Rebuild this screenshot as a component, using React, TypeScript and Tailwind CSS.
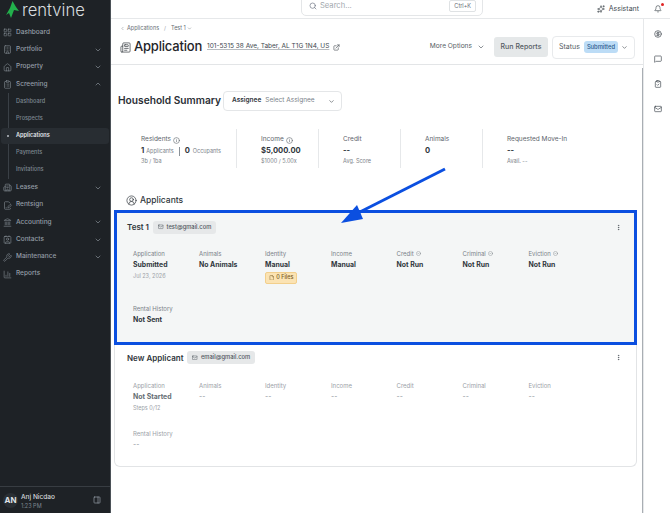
import {
  BarChart3, Bell, Building, ChevronDown, ChevronLeft, ChevronUp, ClipboardCheck, ClipboardList,
  CircleCheck, CircleDollarSign, CircleUserRound, Contact, EllipsisVertical, ExternalLink, File, FileSignature, Home,
  Info, Landmark, LayoutGrid, Mail, MessageSquare, Newspaper, PanelRight, Search, Sparkles, Wrench, Building2,
} from "lucide-react";

const navTop = [
  { label: "Dashboard", icon: LayoutGrid },
  { label: "Portfolio", icon: Building, chevron: true },
  { label: "Property", icon: Home, chevron: true },
];

const navBottom = [
  { label: "Leases", icon: Building2, chevron: true },
  { label: "Rentsign", icon: FileSignature },
  { label: "Accounting", icon: Landmark, chevron: true },
  { label: "Contacts", icon: Contact, chevron: true },
  { label: "Maintenance", icon: Wrench, chevron: true },
  { label: "Reports", icon: BarChart3 },
];

const screeningLinks = ["Dashboard", "Prospects", "Applications", "Payments", "Invitations"];

const NavItem = ({ label, icon: Icon, chevron }: { label: string; icon: typeof Home; chevron?: boolean }) => (
  <div className="flex h-[17.3px] items-center pl-[3px] pr-[8px] text-[#949da6]">
    <Icon size={9} strokeWidth={1.5} className="mr-[4px] text-[#8b949c]" />
    <span className="text-[6.5px] font-medium">{label}</span>
    {chevron && <ChevronDown size={8} className="ml-auto text-[#8b949c]" />}
  </div>
);

const Sidebar = () => (
  <aside className="flex h-full w-[111px] shrink-0 flex-col border-r border-[#4b5157] bg-[#1e2226]">
    <div className="flex h-[24px] shrink-0 items-start pl-[6px] pt-[1px]">
      <svg width="13" height="17" viewBox="0 0 13 17">
        <polygon points="6.5,0 10,6 13,10 8,9 5,17 3,12 0,14 4,7" fill="#22b14c" />
      </svg>
      <span className="ml-[3px] text-[16.6px] leading-[18px] font-light text-[#d8dcdf]">rentvine</span>
    </div>
    <NavItem {...navTop[0]} />
    <NavItem {...navTop[1]} />
    <NavItem {...navTop[2]} />
    <NavItem label="Screening" icon={ClipboardList} />
    <div className="relative pb-[1px]">
      <ChevronUp size={8} className="absolute top-[-13px] right-[8px] text-[#8b949c]" />
      <div className="absolute top-0 bottom-0 left-[8px] w-px bg-[#3a4046]" />
      {screeningLinks.map((link) =>
        link === "Applications" ? (
          <div key={link} className="relative mx-px my-[0.5px] flex h-[16px] items-center rounded-[3px] bg-[#282d32] pl-[15px] text-[5.6px] font-semibold text-[#e4e7ea]">
            <span className="absolute left-[6px] size-[2px] rounded-full bg-[#b8bec4]" />
            {link}
          </div>
        ) : (
          <div key={link} className="flex h-[17px] items-center pl-[16px] text-[5.6px] font-medium text-[#7d8791]">
            {link}
          </div>
        ),
      )}
    </div>
    {navBottom.map((item) => (
      <NavItem key={item.label} {...item} />
    ))}
    <div className="mt-auto flex h-[27px] items-center border-t border-[#383d42] pl-[3px] pr-[9px]">
      <span className="flex size-[15px] items-center justify-center rounded-full bg-[#2a2f34] text-[8px] font-bold text-[#dfe2e5]">AN</span>
      <div className="ml-[3px] flex flex-col pt-[3px]">
        <span className="text-[6.5px] leading-[9px] font-medium text-[#d5d9dc]">Anj Nicdao</span>
        <span className="text-[5.5px] leading-[8px] text-[#7d8791]">1:23 PM</span>
      </div>
      <PanelRight size={8} className="ml-auto text-[#9aa4ae]" />
    </div>
  </aside>
);

const Topbar = () => (
  <div className="relative flex h-[19px] shrink-0 items-center justify-end border-b border-[#e6e8ea] pr-[8px]">
    <div className="absolute top-[-6px] left-[190px] flex h-[22px] w-[182px] items-center rounded-b-[5px] border border-[#e4e6e8] pl-[7px] pr-[6px] pt-[2px]">
      <Search size={8} className="text-[#6b7280]" />
      <span className="ml-[3px] text-[7.6px] text-[#a2a8ae]">Search...</span>
      <span className="ml-auto rounded-[2px] border border-[#dfe2e4] px-[4px] py-px text-[5.5px] text-[#666d74]">Ctrl+K</span>
    </div>
    <Sparkles size={8} className="mr-[4px] text-[#444b52]" />
    <span className="mr-[15px] text-[7px] text-[#444b52]">Assistant</span>
    <div className="relative">
      <Bell size={8} className="text-[#444b52]" />
      <span className="absolute top-[-2px] right-[-2px] size-[3px] rounded-full bg-[#e02424]" />
    </div>
  </div>
);

const PageHeader = () => (
  <div className="shrink-0 border-b border-[#e3e5e7] pl-[9px] pr-[8px]">
    <div className="flex h-[18px] items-center pt-[1px] text-[5.5px] text-[#666d74]">
      <ChevronLeft size={5} className="mr-[2px]" />
      Applications
      <span className="mx-[5px] text-[#9aa0a6]">/</span>
      Test 1
      <ChevronDown size={5} className="ml-[1px]" />
    </div>
    <div className="mb-[7px] flex h-[20px] items-center">
      <Newspaper size={11} strokeWidth={1.5} className="mr-[3px] text-[#30363c]" />
      <span className="text-[13px] font-medium tracking-[-0.2px] text-[#1f2429]">Application</span>
      <span className="ml-[5px] text-[6.5px] text-[#40474e] underline decoration-[#b8bcc0]">101-5315 38 Ave, Taber, AL T1G 1N4, US</span>
      <ExternalLink size={7} className="ml-[4px] text-[#40474e]" />
      <span className="ml-auto text-[6.6px] text-[#555c63]">More Options</span>
      <ChevronDown size={8} className="ml-[5px] text-[#555c63]" />
      <div className="ml-[9px] flex h-[20px] w-[54px] shrink-0 items-center justify-center rounded-[3px] bg-[#e5e8e9] text-[7px] font-medium text-[#555c63]">Run Reports</div>
      <div className="ml-[4px] flex h-[23px] w-[83px] shrink-0 items-center rounded-[4px] border border-[#e8eaec] pl-[6px] pr-[6px]">
        <span className="text-[7px] text-[#555c63]">Status</span>
        <span className="ml-[4px] flex h-[12px] items-center rounded-[3px] bg-[#bcdcf6] px-[3px] text-[5.8px] font-medium text-[#2c5a8c]">Submitted</span>
        <ChevronDown size={7} className="ml-auto text-[#40474e]" />
      </div>
    </div>
  </div>
);

const Stat = ({ label, info, children, sub, width }: { label: string; info?: boolean; children: React.ReactNode; sub?: string; width: string }) => (
  <div className={`${width} flex h-[39px] flex-col border-r border-[#e6e8ea] pt-[6px] pl-[24px] last:border-r-0`}>
    <div className="flex h-[10px] items-center text-[6.5px] text-[#5d646b]">
      {label}
      {info && <Info size={7} className="ml-[2px]" />}
    </div>
    <div className="flex h-[12px] items-center text-[7.6px] font-bold text-[#30363c]">{children}</div>
    {sub && <div className="text-[5.5px] leading-[8px] text-[#7b8289]">{sub}</div>}
  </div>
);

const Summary = () => (
  <div className="flex w-[520px]">
    <Stat label="Residents" info sub="3b / 1ba" width="w-[120px]">
      1<span className="ml-[2px] text-[5.5px] font-normal text-[#7b8289]">Applicants</span>
      <span className="mx-[5px] h-[9px] w-px bg-[#8b9299]" />0
      <span className="ml-[3px] text-[5.5px] font-normal text-[#7b8289]">Occupants</span>
    </Stat>
    <Stat label="Income" info sub="$1000 / 5.00x" width="w-[82px]">$5,000.00</Stat>
    <Stat label="Credit" sub="Avg. Score" width="w-[82px]">--</Stat>
    <Stat label="Animals" width="w-[82px]">0</Stat>
    <Stat label="Requested Move-In" sub="Avail. --" width="w-[148px]">--</Stat>
  </div>
);

const Field = ({ label, value, note, shield, muted, children }: { label: string; value: string; note?: string; shield?: boolean; muted?: boolean; children?: React.ReactNode }) => (
  <div>
    <div className={`flex h-[10px] items-center text-[6px] ${muted ? "text-[#9ba1a7]" : "text-[#7b8289]"}`}>
      {label}
      {shield && <CircleCheck size={5} className="ml-[2px]" />}
    </div>
    <div className={`mt-[1.5px] h-[10px] text-[6.9px] leading-[10px] font-bold ${muted && value === "--" ? "font-normal text-[#8c9298]" : muted ? "text-[#666d74]" : "text-[#30363c]"}`}>{value}</div>
    {note && <div className="mt-[1px] text-[5.5px] leading-[10px] text-[#9ba1a7]">{note}</div>}
    {children}
  </div>
);

const Pill = ({ email }: { email: string }) => (
  <span className="ml-[4px] flex h-[13px] items-center rounded-[3px] bg-[#e6e8e9] px-[5px] text-[5.8px] font-medium text-[#50575e]">
    <Mail size={5.5} className="mr-[3px]" />
    {email}
  </span>
);

const TestCard = () => (
  <div className="h-[135px] border-[3px] border-[#0b4fe0] bg-[#f4f6f6] pt-[7px] pl-[10px] pr-[12px]">
    <div className="flex h-[14px] items-center">
      <span className="text-[8px] font-semibold text-[#30363c]">Test 1</span>
      <Pill email="test@gmail.com" />
      <EllipsisVertical size={7} className="ml-auto text-[#40474e]" />
    </div>
    <div className="mt-[14px] grid grid-cols-[66px_66px_66px_65.5px_66px_66px_66px] pl-[6px]">
      <Field label="Application" value="Submitted" note="Jul 23, 2026" />
      <Field label="Animals" value="No Animals" />
      <Field label="Identity" value="Manual">
        <span className="mt-[2px] flex h-[12px] w-[32px] items-center justify-center rounded-[2px] border border-[#f2cf8c] bg-[#fbe3b3] text-[5.5px] font-medium text-[#7a5c25]">
          <File size={5.5} className="mr-[2px]" />0 Files
        </span>
      </Field>
      <Field label="Income" value="Manual" />
      <Field label="Credit" value="Not Run" shield />
      <Field label="Criminal" value="Not Run" shield />
      <Field label="Eviction" value="Not Run" shield />
    </div>
    <div className="mt-[20px] pl-[6px]">
      <Field label="Rental History" value="Not Sent" />
    </div>
  </div>
);

const NewCard = () => (
  <div className="h-[122px] rounded-b-[6px] border border-t-0 border-[#e2e4e6] pt-[6px] pl-[12px] pr-[14px]">
    <div className="flex h-[13px] items-center">
      <span className="text-[8px] font-semibold text-[#30363c]">New Applicant</span>
      <Pill email="email@gmail.com" />
      <EllipsisVertical size={7} className="ml-auto text-[#40474e]" />
    </div>
    <div className="mt-[16px] grid grid-cols-[66px_66px_66px_65.5px_66px_66px_66px] pl-[6px]">
      <Field muted label="Application" value="Not Started" note="Steps 0/12" />
      <Field muted label="Animals" value="--" />
      <Field muted label="Identity" value="--" />
      <Field muted label="Income" value="--" />
      <Field muted label="Credit" value="--" />
      <Field muted label="Criminal" value="--" />
      <Field muted label="Eviction" value="--" />
    </div>
    <div className="mt-[16px] pl-[6px]">
      <Field muted label="Rental History" value="--" />
    </div>
  </div>
);

const Content = () => (
  <div className="relative min-h-0 flex-1 overflow-hidden pl-[3px] pr-[6px]">
    <div className="absolute top-[3px] right-0 bottom-0 w-px bg-[#a9aeb3]" />
    <div className="mt-[26px] flex h-[20px] items-center pl-[4px]">
      <span className="w-[101px] text-[10.2px] whitespace-nowrap font-semibold text-[#2b3036]">Household Summary</span>
      <div className="ml-[4px] flex h-[20px] w-[119px] items-center rounded-[4px] border border-[#e4e6e8] pl-[8px] pr-[6px]">
        <span className="text-[6.5px] font-semibold text-[#30363c]">Assignee</span>
        <span className="ml-[4px] text-[6.5px] text-[#7b8289]">Select Assignee</span>
        <ChevronDown size={7} className="ml-auto text-[#40474e]" />
      </div>
    </div>
    <div className="mt-[18px] pl-[3px]">
      <Summary />
    </div>
    <div className="mt-[23px] flex h-[18px] items-center pl-[12px]">
      <CircleUserRound size={11} strokeWidth={1.5} className="mr-[3px] text-[#30363c]" />
      <span className="text-[8.5px] font-medium text-[#30363c]">Applicants</span>
    </div>
    <div className="mt-[1px]">
      <TestCard />
      <NewCard />
    </div>
    {/* arrow drawn over the screenshot */}
    <svg className="absolute top-[100px] left-[225px]" width="115" height="60" viewBox="0 0 115 60">
      <line x1="109" y1="4" x2="14" y2="52" stroke="#0b4fe0" strokeWidth="3" />
      <polygon points="5,58 21,40 27,54" fill="#0b4fe0" />
    </svg>
  </div>
);

const RightRail = () => (
  <div className="flex w-[27px] shrink-0 flex-col items-center gap-[17px] border-l border-[#e6e8ea] pl-[1px] pt-[11px] text-[#40474e]">
    <CircleDollarSign size={8} />
    <MessageSquare size={8} />
    <ClipboardCheck size={8} />
    <Mail size={8} />
  </div>
);

export default function App() {
  return (
    <div className="flex h-[513px] w-[670px] overflow-hidden bg-white font-['Inter',sans-serif]">
      <Sidebar />
      <div className="flex min-w-0 flex-1 flex-col">
        <Topbar />
        <div className="flex min-h-0 flex-1">
          <div className="flex min-w-0 flex-1 flex-col">
            <PageHeader />
            <Content />
          </div>
          <RightRail />
        </div>
      </div>
    </div>
  );
}
